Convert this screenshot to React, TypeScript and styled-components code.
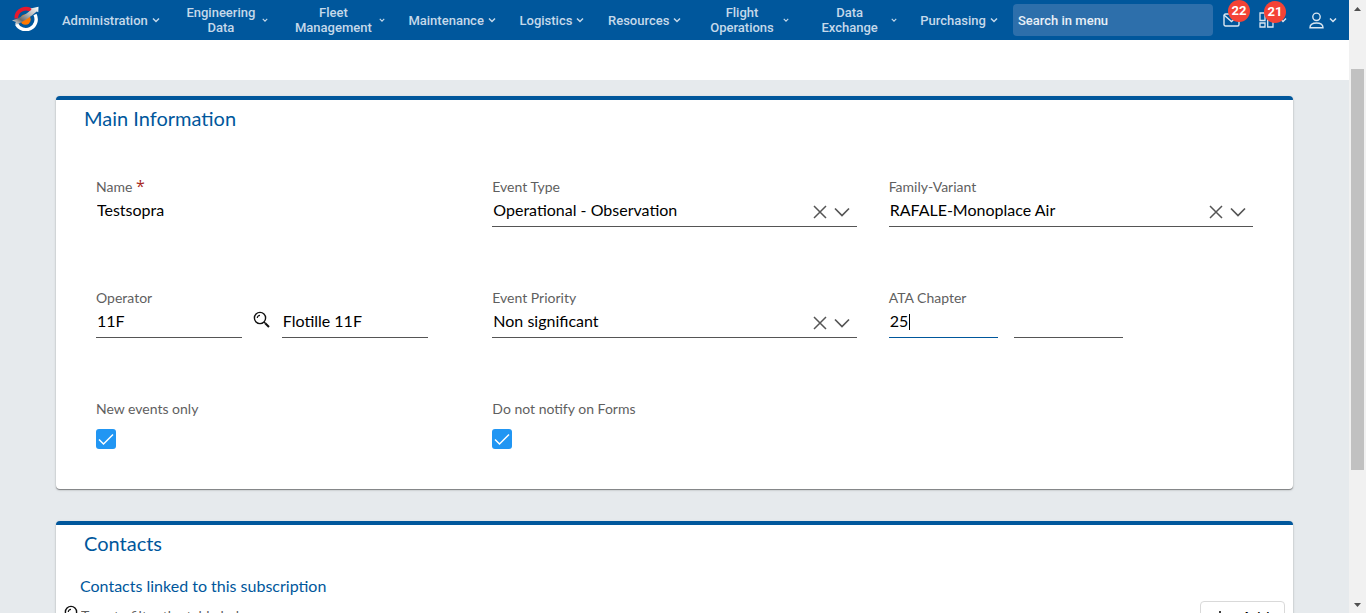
import React from "react";
import styled, { createGlobalStyle, css } from "styled-components";

const blue = "#00579c";
const line = "#555555";

const GlobalStyle = createGlobalStyle`
  *, *::before, *::after { box-sizing: border-box; }
  body {
    margin: 0;
    overflow: hidden;
    background: #e6eaed;
    font-family: Lato, "Liberation Sans", sans-serif;
    color: #000;
  }
  button, input, select { font: inherit; color: inherit; }
`;

const Shell = styled.div`
  display: flex;
  height: 100vh;
  overflow: hidden;
`;

const Page = styled.div`
  flex: 1;
  min-width: 0;
`;

const NavBar = styled.nav`
  display: flex;
  align-items: center;
  height: 40px;
  padding: 0 12px;
  background: ${blue};
  color: #fff;
  font-family: Roboto, "Liberation Sans", sans-serif;
  font-size: 13px;
  font-weight: 500;
  line-height: 15px;
`;

const HomeLink = styled.a`
  display: flex;
  margin-right: 11px;
  padding-bottom: 4px;
`;

const Menu = styled.ul`
  display: flex;
  flex: 1;
  justify-content: space-between;
  margin: 0 15px 0 0;
  padding: 0;
  list-style: none;
`;

const MenuButton = styled.button`
  display: flex;
  align-items: center;
  gap: 4px;
  height: 40px;
  padding: 0 0 0 12px;
  border: 0;
  background: none;
  color: #c5d9ea;
  cursor: pointer;
  svg { flex: none; }
`;

const MenuLabel = styled.span<{ $wrapped?: boolean }>`
  text-align: center;
  white-space: pre-line;
  ${(p) => p.$wrapped && css`
    min-width: 74px;
    padding: 0 3px;
  `}
`;

const MenuSearch = styled.input`
  width: 200px;
  height: 32px;
  padding: 0 5px;
  border: 0;
  border-radius: 4px;
  background: #2d6fab;
  color: #fff;
  &::placeholder { color: #e8f0f7; opacity: 1; }
`;

const NavActions = styled.div`
  display: flex;
  align-items: center;
  margin-left: 10px;
`;

const IconButton = styled.button<{ $gap?: number }>`
  position: relative;
  display: flex;
  align-items: center;
  gap: 5px;
  margin-left: ${(p) => p.$gap ?? 0}px;
  padding: 0;
  border: 0;
  background: none;
  color: #d9e6f1;
  cursor: pointer;
`;

const Badge = styled.span`
  position: absolute;
  left: 5px;
  bottom: 5px;
  width: 22px;
  height: 22px;
  border-radius: 50%;
  background: #f44336;
  color: #fff;
  font-size: 13px;
  font-weight: 700;
  line-height: 22px;
  text-align: center;
`;

const SubHeader = styled.div`
  height: 40px;
  background: #fff;
`;

const Main = styled.main`
  display: flex;
  flex-direction: column;
  gap: 32px;
  padding: 16px 56px;
`;

const Card = styled.section`
  border-top: 4px solid ${blue};
  border-radius: 4px;
  background: #fff;
  box-shadow: 0 1px 1px rgba(0, 0, 0, 0.4), 0 1px 3px rgba(0, 0, 0, 0.15);
`;

const CardTitle = styled.h2`
  margin: 0;
  padding: 6px 28px 8px;
  color: ${blue};
  font-size: 20px;
  font-weight: 400;
  line-height: 24px;
`;

const FieldGrid = styled.div`
  display: grid;
  grid-template-columns: repeat(3, 1fr);
  gap: 61px 32px;
  padding: 39px 40px 40px;
`;

const Label = styled.label`
  display: block;
  color: #5f5f5f;
  font-size: 14px;
  line-height: 20px;
`;

const Required = styled.span`
  color: #a82a1c;
  font-family: "Open Sans", sans-serif;
  font-size: 16px;
  line-height: 16px;
`;

const TextInput = styled.input<{ $plain?: boolean }>`
  display: block;
  width: 100%;
  min-width: 0;
  height: 30px;
  padding: 0 1px 4px;
  border: 0;
  border-bottom: 1px solid ${(p) => (p.$plain ? "transparent" : line)};
  border-radius: 0;
  background: none;
  outline: 0;
  font-size: 16px;
`;

const SelectRow = styled.div`
  display: flex;
  align-items: center;
  height: 30px;
  padding-right: 6px;
  border-bottom: 1px solid ${line};
  color: ${line};
  svg { flex: none; }
`;

const Select = styled.select`
  flex: 1;
  min-width: 0;
  height: 29px;
  padding: 0 1px 4px;
  border: 0;
  appearance: none;
  background: none;
  outline: 0;
  color: #000;
  font-size: 16px;
`;

const ClearButton = styled.button`
  display: flex;
  margin-right: 6px;
  padding: 0;
  border: 0;
  background: none;
  color: ${line};
  cursor: pointer;
`;

const OperatorRow = styled.div`
  display: grid;
  grid-template-columns: 40% 11% 40%;
`;

const LookupButton = styled.button`
  display: flex;
  align-items: center;
  justify-content: center;
  padding: 0 0 8px;
  border: 0;
  background: none;
  cursor: pointer;
`;

const ChapterRow = styled.div`
  display: grid;
  grid-template-columns: 30% 30%;
  gap: 16px;
`;

const ActiveInput = styled.div`
  position: relative;
  input {
    border-bottom-color: ${blue};
    caret-color: transparent;
  }
  &::after {
    content: "";
    position: absolute;
    left: 20px;
    top: 6px;
    width: 1px;
    height: 16px;
    background: #000;
  }
`;

const CheckBox = styled.span`
  display: grid;
  width: 20px;
  height: 20px;
  margin-top: 10px;
  input, svg { grid-area: 1 / 1; }
  input {
    width: 20px;
    height: 20px;
    margin: 0;
    border-radius: 3px;
    appearance: none;
    background: #fff;
    border: 1px solid ${line};
  }
  input:checked { background: #2196f3; border: 0; }
  svg { pointer-events: none; z-index: 1; }
`;

const Subtitle = styled.h3`
  margin: 0;
  padding: 11px 24px 0;
  color: ${blue};
  font-size: 16px;
  font-weight: 400;
  line-height: 24px;
`;

const TableTools = styled.div`
  display: flex;
  justify-content: space-between;
  margin-top: 3px;
  padding: 0 8px;
`;

const Filter = styled.label`
  display: flex;
  flex: 1;
  align-items: center;
  height: 32px;
  svg { margin-bottom: 8px; }
  input {
    width: 240px;
    padding: 0 0 4px;
    border: 0;
    outline: 0;
    font-size: 14px;
  }
  input::placeholder { color: #5f5f5f; opacity: 1; }
`;

const AddButton = styled.button`
  display: flex;
  align-items: center;
  justify-content: center;
  gap: 16px;
  width: 85px;
  height: 32px;
  padding: 0 0 2px;
  border: 1px solid #d9d9d9;
  border-radius: 4px;
  background: #fff;
  font-size: 16px;
`;

const ScrollTrack = styled.div`
  display: flex;
  flex: none;
  flex-direction: column;
  align-items: center;
  justify-content: space-between;
  width: 17px;
  padding: 7px 2px 6px;
  background: #f1f1f1;
`;

const ScrollSpace = styled.div`
  display: flex;
  flex: 1;
  flex-direction: column;
  width: 13px;
  padding: 58px 0 0;
`;

const ScrollThumb = styled.div`
  height: 75%;
  background: #c1c1c1;
`;

const Chevron = ({ size = 8 }: { size?: number }) => (
  <svg width={size} height={size} viewBox="0 0 8 8" fill="none" stroke="currentColor" strokeWidth="1.5">
    <path d="M1 2.5 4 5.5 7 2.5" />
  </svg>
);

const Logo = () => (
  <svg width="27" height="25" viewBox="0 0 27 25">
    <defs>
      <linearGradient id="wing" x1="0" y1="1" x2="1" y2="0">
        <stop offset="0" stopColor="#fff" />
        <stop offset=".3" stopColor="#6b6b6b" />
        <stop offset=".6" stopColor="#b5b5b5" />
        <stop offset="1" stopColor="#fff" />
      </linearGradient>
    </defs>
    <path d="M4.300 12.500A9.500 9.500 0 0 1 20.500 5.500" fill="none" stroke="#e5182d" strokeWidth="3.600" />
    <circle cx="13.500" cy="13.500" r="5.200" fill="#ff7900" />
    <path d="M23 8.500A10 10 0 0 1 4.500 18" fill="none" stroke="#fff" strokeWidth="3.400" />
    <path d="M0 14.500C8 12.500 14 8 19.500 3.800L18.500 2.500 26.500 .8 26.300 6.300 24.700 5.400C19 10.500 12 15 5 18.500L3 17.500 4 16Z" fill="url(#wing)" />
  </svg>
);

const MagnifierIcon = ({ size = 17 }: { size?: number }) => (
  <svg width={size} height={size} viewBox="0 0 17 17" fill="none" stroke="#111" strokeWidth="1.400">
    <circle cx="7" cy="7" r="5.600" />
    <path d="M4.300 7A2.700 2.700 0 0 1 7 4.300" strokeWidth="1.200" />
    <path d="M11 11 12.300 12.300" />
    <path d="M12.200 12.200 16 16" strokeWidth="2" />
  </svg>
);

const CrossIcon = () => (
  <svg width="14" height="14" viewBox="0 0 14 14" fill="none" stroke="currentColor" strokeWidth="1.500">
    <path d="M1 1 13 13M13 1 1 13" />
  </svg>
);

const DropIcon = () => (
  <svg width="18" height="14" viewBox="0 0 18 14" fill="none" stroke="currentColor" strokeWidth="1.700">
    <path d="M2 3.500 9 10.500 16 3.500" />
  </svg>
);

const MailIcon = () => (
  <svg width="17" height="14" viewBox="0 0 17 14" fill="none" stroke="currentColor" strokeWidth="1.400">
    <rect x="1" y="1" width="15" height="12" rx="1.500" />
    <path d="M1 2 8.500 8.500 16 2" />
  </svg>
);

const AppsIcon = () => (
  <svg width="15" height="16" viewBox="0 0 15 16" fill="none" stroke="currentColor" strokeWidth="1.300">
    <path d="M1 1H6V8.500H1ZM1 11H6V15H1ZM8.700 1H14V5H8.700ZM8.700 7.500H14V15H8.700Z" />
  </svg>
);

const PersonIcon = () => (
  <svg width="15" height="17" viewBox="0 0 15 17" fill="none" stroke="currentColor" strokeWidth="1.400">
    <circle cx="7.500" cy="4.800" r="3.700" />
    <path d="M1 15.800C1 12.500 3.500 11 7.500 11S14 12.500 14 15.800Z" />
  </svg>
);

const menus = [
  "Administration",
  "Engineering\nData",
  "Fleet\nManagement",
  "Maintenance",
  "Logistics",
  "Resources",
  "Flight\nOperations",
  "Data\nExchange",
  "Purchasing",
];

function SelectField({ id, label, value }: { id: string; label: string; value: string }) {
  return (
    <div>
      <Label htmlFor={id}>{label}</Label>
      <SelectRow>
        <Select id={id} defaultValue={value}>
          <option>{value}</option>
        </Select>
        <ClearButton type="button" aria-label={`Clear ${label}`}>
          <CrossIcon />
        </ClearButton>
        <DropIcon />
      </SelectRow>
    </div>
  );
}

function CheckField({ id, label }: { id: string; label: string }) {
  return (
    <div>
      <Label htmlFor={id}>{label}</Label>
      <CheckBox>
        <input id={id} type="checkbox" defaultChecked />
        <svg width="20" height="20" viewBox="0 0 20 20" fill="none" stroke="#fff" strokeWidth="1.500">
          <path d="M3 10.500 7.500 15 17 5.500" />
        </svg>
      </CheckBox>
    </div>
  );
}

export default function App() {
  return (
    <>
      <GlobalStyle />
      <Shell>
        <Page>
          <NavBar>
            <HomeLink href="#" aria-label="Home">
              <Logo />
            </HomeLink>
            <Menu>
              {menus.map((name) => {
                const wrapped = name.includes("\n");
                return (
                  <li key={name}>
                    <MenuButton type="button">
                      <MenuLabel $wrapped={wrapped}>{name}</MenuLabel>
                      <Chevron size={wrapped ? 6 : 8} />
                    </MenuButton>
                  </li>
                );
              })}
            </Menu>
            <MenuSearch aria-label="Search in menu" placeholder="Search in menu" />
            <NavActions>
              <IconButton type="button" aria-label="Messages">
                <MailIcon />
                <Badge>22</Badge>
              </IconButton>
              <IconButton type="button" aria-label="Applications" $gap={19}>
                <AppsIcon />
                <Chevron />
                <Badge>21</Badge>
              </IconButton>
              <IconButton type="button" aria-label="Account" $gap={22}>
                <PersonIcon />
                <Chevron />
              </IconButton>
            </NavActions>
          </NavBar>
          <SubHeader />
          <Main>
            <Card>
              <CardTitle>Main Information</CardTitle>
              <FieldGrid>
                <div>
                  <Label htmlFor="name">
                    Name <Required>*</Required>
                  </Label>
                  <TextInput id="name" $plain defaultValue="Testsopra" />
                </div>
                <SelectField id="type" label="Event Type" value="Operational - Observation" />
                <SelectField id="family" label="Family-Variant" value="RAFALE-Monoplace Air" />
                <div>
                  <Label htmlFor="operator">Operator</Label>
                  <OperatorRow>
                    <TextInput id="operator" defaultValue="11F" />
                    <LookupButton type="button" aria-label="Find operator">
                      <MagnifierIcon />
                    </LookupButton>
                    <TextInput aria-label="Operator name" defaultValue="Flotille 11F" />
                  </OperatorRow>
                </div>
                <SelectField id="priority" label="Event Priority" value="Non significant" />
                <div>
                  <Label htmlFor="chapter">ATA Chapter</Label>
                  <ChapterRow>
                    <ActiveInput>
                      <TextInput id="chapter" defaultValue="25" />
                    </ActiveInput>
                    <TextInput aria-label="ATA section" />
                  </ChapterRow>
                </div>
                <CheckField id="new-events" label="New events only" />
                <CheckField id="no-forms" label="Do not notify on Forms" />
              </FieldGrid>
            </Card>
            <Card>
              <CardTitle>Contacts</CardTitle>
              <Subtitle>Contacts linked to this subscription</Subtitle>
              <TableTools>
                <Filter>
                  <MagnifierIcon />
                  <input aria-label="Filter" placeholder="Type to filter the table below" />
                </Filter>
                <AddButton type="button">
                  <svg width="10" height="10" viewBox="0 0 10 10" stroke="#000" strokeWidth="1.500">
                    <path d="M5 0V10M0 5H10" />
                  </svg>
                  Add
                </AddButton>
              </TableTools>
            </Card>
          </Main>
        </Page>
        <ScrollTrack>
          <svg width="7" height="4" viewBox="0 0 7 4" fill="#505050">
            <path d="M0 4 3.500 0 7 4Z" />
          </svg>
          <ScrollSpace>
            <ScrollThumb />
          </ScrollSpace>
          <svg width="7" height="4" viewBox="0 0 7 4" fill="#505050">
            <path d="M0 0 3.500 4 7 0Z" />
          </svg>
        </ScrollTrack>
      </Shell>
    </>
  );
}
